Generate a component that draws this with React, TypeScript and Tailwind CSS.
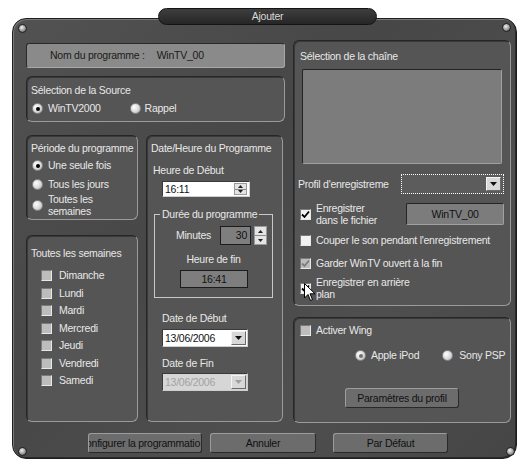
import React from "react";

const font = { fontFamily: '"Liberation Sans", Arial, sans-serif' };

function Group({ className = "", children }: { className?: string; children?: React.ReactNode }) {
  return (
    <div
      className={`rounded-[6px] border border-t-[#262626] border-l-[#262626] border-r-[#9a9a9a] border-b-[#9a9a9a] bg-[#555555] shadow-[inset_1px_1px_0_#3a3a3a] ${className}`}
    >
      {children}
    </div>
  );
}

function Radio({ on = false, dim = false }: { on?: boolean; dim?: boolean }) {
  return (
    <span className="flex h-[11px] w-[11px] shrink-0 items-center justify-center rounded-full border border-[#8a8a8a] bg-[radial-gradient(circle_at_35%_35%,#ffffff,#d6d6d6_60%,#a0a0a0)]">
      {on && <span className={`h-[4px] w-[4px] rounded-full ${dim ? "bg-[#707070]" : "bg-black"}`} />}
    </span>
  );
}

function Check({ on = false, tone = "white" }: { on?: boolean; tone?: "white" | "gray" }) {
  const bg = tone === "white" ? "bg-[#f2f2f2]" : "bg-[#bdbdbd]";
  return (
    <span className={`flex h-[11px] w-[11px] shrink-0 items-center justify-center border border-t-[#7a7a7a] border-l-[#7a7a7a] border-r-[#e8e8e8] border-b-[#e8e8e8] ${bg}`}>
      {on && (
        <svg width="9" height="9" viewBox="0 0 9 9">
          <path d="M1 4.5 L3.5 7 L8 1.5" fill="none" stroke={tone === "white" ? "#000" : "#7d7d7d"} strokeWidth="1.8" />
        </svg>
      )}
    </span>
  );
}

function Spin({ h = 15 }: { h?: number }) {
  return (
    <div className="flex w-[13px] shrink-0 flex-col border border-[#9a9a9a]" style={{ height: h }}>
      <div className="flex flex-1 items-center justify-center border-b border-[#8a8a8a] bg-[#e4e4e4]">
        <svg width="5" height="3" viewBox="0 0 5 3"><path d="M0 3 L2.5 0 L5 3 Z" fill="#222" /></svg>
      </div>
      <div className="flex flex-1 items-center justify-center bg-[#e4e4e4]">
        <svg width="5" height="3" viewBox="0 0 5 3"><path d="M0 0 L2.5 3 L5 0 Z" fill="#222" /></svg>
      </div>
    </div>
  );
}

function DropArrow({ dim = false }: { dim?: boolean }) {
  return (
    <div className="flex h-[14px] w-[15px] shrink-0 items-center justify-center border border-t-[#f4f4f4] border-l-[#f4f4f4] border-r-[#6a6a6a] border-b-[#6a6a6a] bg-[#d8d8d8]">
      <svg width="7" height="4" viewBox="0 0 7 4"><path d="M0 0 L3.5 4 L7 0 Z" fill={dim ? "#a0a0a0" : "#111"} /></svg>
    </div>
  );
}

function Btn({ className = "", children }: { className?: string; children: React.ReactNode }) {
  return (
    <div
      className={`flex h-[20px] items-center overflow-hidden whitespace-nowrap rounded-[3px] border border-t-[#9c9c9c] border-l-[#9c9c9c] border-r-[#2a2a2a] border-b-[#2a2a2a] bg-[#6c6c6c] text-[#111] ${className}`}
    >
      {children}
    </div>
  );
}

function Screw() {
  return (
    <span className="block h-[9px] w-[9px] rounded-full border border-[#222] bg-[radial-gradient(circle_at_40%_35%,#f0f0f0,#9a9a9a_55%,#3a3a3a)]" />
  );
}

const days = ["Dimanche", "Lundi", "Mardi", "Mercredi", "Jeudi", "Vendredi", "Samedi"];

export default function App() {
  return (
    <div className="h-[462px] w-[520px] overflow-hidden whitespace-nowrap bg-white text-[10.5px] leading-[13px] tracking-[-0.25px] text-[#e8e8e8]" style={font}>
      <div className="relative z-10 ml-[158px] mt-[8px] flex h-[17px] w-[219px] items-center justify-center rounded-full border border-[#141414] bg-[linear-gradient(#3e3e3e,#262626)] text-[#d8d8d8]">
        Ajouter
      </div>
      <div className="relative ml-[12px] mt-[-7px] h-[441px] w-[505px] rounded-[14px] border border-[#1e1e1e] bg-[linear-gradient(135deg,#525252,#474747_40%,#4f4f4f_70%,#454545)] shadow-[inset_1px_1px_0_#7a7a7a,inset_-1px_-1px_0_#2a2a2a]">
        <div className="absolute left-[5px] top-[5px]"><Screw /></div>
        <div className="absolute right-[5px] top-[4px]"><Screw /></div>
        <div className="absolute bottom-[2px] left-[5px]"><Screw /></div>
        <div className="absolute bottom-[2px] right-[1px]"><Screw /></div>

        <div className="flex flex-col pl-[13px] pt-[21px]">
          <div className="flex gap-[8px]">
            {/* left column */}
            <div className="flex w-[259px] flex-col">
              <div className="mt-[3px] flex h-[25px] items-center rounded-[3px] border border-t-[#2a2a2a] border-l-[#2a2a2a] border-r-[#a8a8a8] border-b-[#a8a8a8] bg-[#8a8a8a] pl-[23px] text-[#1a1a1a]">
                <span>Nom du programme :</span>
                <span className="ml-[12px]">WinTV_00</span>
              </div>

              <Group className="mt-[8px] h-[46px] px-[4px] pt-[7px]">
                <div>Sélection de la Source</div>
                <div className="mt-[5px] flex items-center">
                  <span className="ml-[1px]"><Radio on /></span>
                  <span className="ml-[5px]">WinTV2000</span>
                  <span className="ml-[29px]"><Radio /></span>
                  <span className="ml-[4px]">Rappel</span>
                </div>
              </Group>

              <div className="mt-[13px] flex gap-[8px]">
                <div className="flex w-[112px] flex-col">
                  <Group className="h-[85px] px-[4px] pt-[6px]">
                    <div>Période du programme</div>
                    <div className="mt-[4px] flex items-center">
                      <span className="ml-[1px]"><Radio on /></span>
                      <span className="ml-[5px]">Une seule fois</span>
                    </div>
                    <div className="mt-[6px] flex items-center">
                      <span className="ml-[1px]"><Radio /></span>
                      <span className="ml-[5px]">Tous les jours</span>
                    </div>
                    <div className="mt-[2px] flex items-center">
                      <span className="ml-[1px]"><Radio /></span>
                      <span className="ml-[5px] leading-[12px]">Toutes les<br />semaines</span>
                    </div>
                  </Group>
                  <Group className="mt-[15px] h-[187px] px-[4px] pt-[11px]">
                    <div>Toutes les semaines</div>
                    <div className="ml-[10px] mt-[9px] flex flex-col gap-[4.5px]">
                      {days.map((d) => (
                        <div key={d} className="flex items-center">
                          <Check tone="gray" />
                          <span className="ml-[7px]">{d}</span>
                        </div>
                      ))}
                    </div>
                  </Group>
                </div>

                <Group className="h-[287px] w-[137px] px-[4px] pt-[6px]">
                  <div>Date/Heure du Programme</div>
                  <div className="ml-[2px] mt-[9px]">Heure de Début</div>
                  <div className="ml-[11px] mt-[4px] flex h-[16px] w-[88px] items-center border border-t-[#3a3a3a] border-l-[#3a3a3a] border-r-[#cfcfcf] border-b-[#cfcfcf] bg-white pl-[2px] pr-[2px] text-[#111]">
                    <span className="flex-1">16:11</span>
                    <Spin h={12} />
                  </div>

                  <div className="relative ml-[3px] mt-[17px] h-[84px] w-[119px] border border-[#c8c8c8] pt-[11px]">
                    <span className="absolute left-[5px] top-[-7px] bg-[#555555] px-[2px]">Durée du programme</span>
                    <div className="flex items-center">
                      <span className="ml-[21px]">Minutes</span>
                      <span className="ml-[9px] flex h-[19px] w-[31px] items-center justify-end border border-[#1c1c1c] bg-[#7e7e7e] pr-[3px] text-[#111]">30</span>
                      <span className="ml-[3px]"><Spin h={19} /></span>
                    </div>
                    <div className="mt-[8px] text-center">Heure de fin</div>
                    <div className="ml-[25px] mt-[4px] flex h-[18px] w-[68px] items-center justify-center border border-[#1c1c1c] bg-[#7e7e7e] text-[#111]">16:41</div>
                  </div>

                  <div className="ml-[11px] mt-[14px]">Date de Début</div>
                  <div className="ml-[11px] mt-[4px] flex h-[18px] w-[86px] items-center border border-t-[#3a3a3a] border-l-[#3a3a3a] border-r-[#cfcfcf] border-b-[#cfcfcf] bg-white pl-[2px] pr-[1px] text-[#111]">
                    <span className="flex-1">13/06/2006</span>
                    <DropArrow />
                  </div>
                  <div className="ml-[11px] mt-[10px]">Date de Fin</div>
                  <div className="ml-[11px] mt-[3px] flex h-[18px] w-[86px] items-center border border-t-[#3a3a3a] border-l-[#3a3a3a] border-r-[#cfcfcf] border-b-[#cfcfcf] bg-[#d6d6d6] pl-[2px] pr-[1px] text-[#a2a2a2]">
                    <span className="flex-1">13/06/2006</span>
                    <DropArrow dim />
                  </div>
                </Group>
              </div>
            </div>

            {/* right column */}
            <div className="flex w-[218px] flex-col">
              <Group className="relative h-[266px] px-[6px] pt-[9px]">
                <div>Sélection de la chaîne</div>
                <div className="ml-[2px] mt-[6px] h-[95px] w-[200px] rounded-[2px] border border-t-[#242424] border-l-[#242424] border-r-[#a0a0a0] border-b-[#a0a0a0] bg-[#7c7c7c]" />
                <div className="mt-[10px] flex items-center">
                  <span className="ml-[-2px] w-[106px] overflow-hidden">Profil d'enregistreme</span>
                  <div className="flex h-[20px] w-[106px] items-center border border-dotted border-white bg-[#5c5c5c] pr-[2px]">
                    <span className="flex-1" />
                    <DropArrow />
                  </div>
                </div>
                <div className="mt-[8px] flex items-center">
                  <Check on />
                  <span className="ml-[5px] w-[94px] leading-[12px]">Enregistrer<br />dans le fichier</span>
                  <div className="flex h-[22px] w-[102px] items-center justify-center rounded-[2px] border border-t-[#242424] border-l-[#242424] border-r-[#a0a0a0] border-b-[#a0a0a0] bg-[#7c7c7c] text-[#111]">WinTV_00</div>
                </div>
                <div className="mt-[8px] flex items-center">
                  <Check />
                  <span className="ml-[5px]">Couper le son pendant l'enregistrement</span>
                </div>
                <div className="mt-[10px] flex items-center">
                  <Check on tone="gray" />
                  <span className="ml-[5px]">Garder WinTV ouvert à la fin</span>
                </div>
                <div className="relative mt-[6px] flex items-center">
                  <Check on />
                  <span className="ml-[5px] leading-[12px]">Enregistrer en arrière<br />plan</span>
                  <svg className="absolute left-[4px] top-[7px]" width="12" height="19" viewBox="0 0 12 19">
                    <path d="M0.5 0.5 L0.5 15 L4 11.5 L6.5 17.5 L8.5 16.6 L6 10.8 L11 10.8 Z" fill="#fff" stroke="#000" strokeWidth="1" />
                  </svg>
                </div>
              </Group>

              <Group className="mt-[11px] h-[106px] px-[6px] pt-[6px]">
                <div className="flex items-center">
                  <Check tone="gray" />
                  <span className="ml-[5px]">Activer Wing</span>
                </div>
                <div className="mt-[12px] flex items-center">
                  <span className="ml-[55px]"><Radio on dim /></span>
                  <span className="ml-[5px]">Apple iPod</span>
                  <span className="ml-[23px]"><Radio /></span>
                  <span className="ml-[6px]">Sony PSP</span>
                </div>
                <Btn className="ml-[45px] mt-[26px] w-[114px] justify-center">Paramètres du profil</Btn>
              </Group>
            </div>
          </div>

          <div className="mt-[10px] flex">
            <Btn className="ml-[62px] w-[114px] justify-end pr-[1px]">Configurer la programmatio</Btn>
            <Btn className="ml-[8px] w-[106px] justify-center">Annuler</Btn>
            <Btn className="ml-[17px] w-[115px] justify-center">Par Défaut</Btn>
          </div>
        </div>
      </div>
    </div>
  );
}
